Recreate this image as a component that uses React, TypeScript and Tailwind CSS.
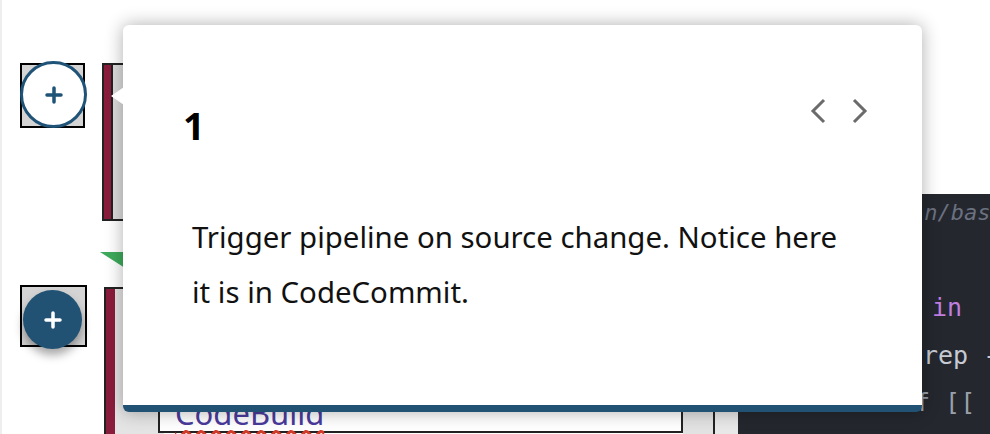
import React from 'react';

const font = { fontFamily: '"Noto Sans", "Open Sans", sans-serif' };

const PlusIcon = ({ color }: { color: string }) => (
    <svg width="18" height="18" viewBox="0 0 18 18">
        <path d="M9 2v14M2 9h14" stroke={color} strokeWidth="3.5" strokeLinecap="round" />
    </svg>
);

const Chevron = ({ dir }: { dir: 'left' | 'right' }) => (
    <svg width="16" height="26" viewBox="0 0 16 26">
        <path
            d={dir === 'left' ? 'M14 2L3 13l11 11' : 'M2 2l11 11L2 24'}
            fill="none"
            stroke="#6b6b6b"
            strokeWidth="3"
        />
    </svg>
);

// diagram behind the tour popover
const Diagram = () => (
    <div className="absolute inset-0">
        <div className="absolute left-0 top-0 h-full w-[2px] bg-[#eeeeee]" />

        {/* step button 1 */}
        <div className="absolute left-[20px] top-[63px] h-[65px] w-[65px] border-2 border-black bg-[#d4d4d4]" />
        <div className="absolute left-[20px] top-[61px] flex h-[67px] w-[67px] items-center justify-center rounded-full border-[3px] border-[#1f5377] bg-white">
            <PlusIcon color="#1f5377" />
        </div>

        {/* step button 2 */}
        <div className="absolute left-[20px] top-[285px] h-[62px] w-[67px] border-2 border-black bg-[#d4d4d4]" />
        <div className="absolute left-[23px] top-[290px] flex h-[59px] w-[59px] items-center justify-center rounded-full bg-[#215274] shadow-[0_6px_10px_rgba(0,0,0,0.35)]">
            <PlusIcon color="#ffffff" />
        </div>

        {/* source stage box */}
        <div className="absolute left-[102px] top-[63px] flex h-[158px] w-[60px] border-2 border-[#222]">
            <div className="w-[9px] border-r-2 border-[#222] bg-[#8a1c3c]" />
            <div className="flex-1 bg-[#dcdcdc]" />
        </div>

        <svg className="absolute left-[100px] top-[252px]" width="60" height="20">
            <polygon points="0,0 50,0 25,16" fill="#3dab5b" />
        </svg>

        {/* build stage box */}
        <div className="absolute left-[104px] top-[287px] flex h-[160px] w-[60px] border-l-2 border-t-2 border-[#222]">
            <div className="w-[9px] bg-[#8a1c3c]" />
            <div className="flex-1 bg-[#e4e4e4]" />
        </div>

        <div className="absolute left-[158px] top-[390px] h-[43px] w-[525px] border-2 border-[#222] bg-white">
            <div
                className="absolute left-[15px] top-[6px] whitespace-nowrap text-[31px] leading-none text-[#4a3a9c] underline decoration-wavy decoration-[#d23a2a] underline-offset-[5px]"
                style={font}
            >
                CodeBuild
            </div>
        </div>
        <div className="absolute left-[683px] top-[392px] h-[42px] w-[30px] bg-[#e2e2e2]" />
        <div className="absolute left-[713px] top-[392px] h-[42px] w-[2px] bg-[#222]" />
        <div className="absolute left-[715px] top-[392px] h-[42px] w-[23px] bg-[#e8e8e8]" />

        {/* code editor */}
        <div
            className="absolute left-[738px] top-[194px] bottom-0 right-0 whitespace-nowrap bg-[#24272e] text-[25px] leading-none"
            style={{ fontFamily: '"DejaVu Sans Mono", "Liberation Mono", monospace' }}
        >
            <div className="absolute left-[120px] top-[8px] text-[22px] italic text-[#6b7180]">#!/bin/bash</div>
            <div className="absolute left-[194px] top-[101px] text-[#c07ee0]">in</div>
            <div className="absolute left-[185px] top-[149px] text-[#c6cad2]">rep -</div>
            <div className="absolute left-[177px] top-[196px] text-[#9aa0aa]">f [[</div>
        </div>
    </div>
);

export default function App() {
    return (
        <div className="relative h-[434px] w-[990px] overflow-hidden bg-white">
            <Diagram />

            {/* tour popover */}
            <div className="absolute left-[123px] top-[25px] h-[387px] w-[799px] rounded-[6px] border-b-[7px] border-[#215274] bg-white shadow-[0_0_18px_rgba(0,0,0,0.32)]" style={font}>
                <svg className="absolute left-[-12px] top-[62px]" width="13" height="18">
                    <polygon points="13,0 0,9 13,18" fill="#ffffff" />
                </svg>
                <div className="flex items-start justify-between pl-[60px] pr-[54px] pt-[81px]">
                    <div className="text-[38px] font-bold leading-none text-black">1</div>
                    <div className="-mt-[8px] flex gap-[26px]">
                        <Chevron dir="left" />
                        <Chevron dir="right" />
                    </div>
                </div>
                <p className="mt-[66px] whitespace-nowrap pl-[69px] text-[29.4px] leading-[55px] text-[#111]">
                    Trigger pipeline on source change. Notice here
                    <br />
                    it is in CodeCommit.
                </p>
            </div>
        </div>
    );
}
